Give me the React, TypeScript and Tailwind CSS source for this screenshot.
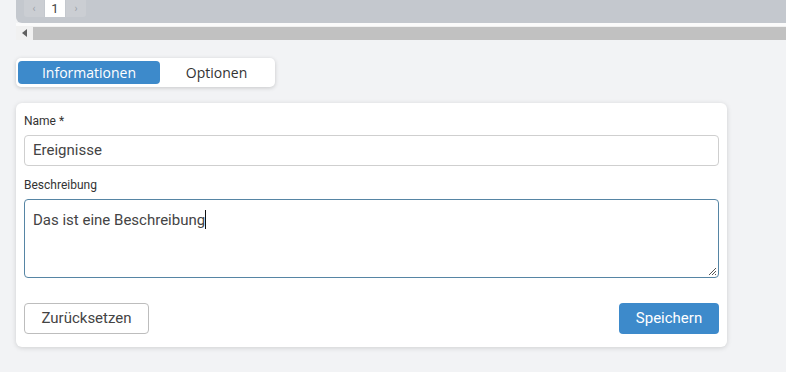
import React from "react";

export default function App() {
  const roboto = { fontFamily: "Roboto, 'Liberation Sans', sans-serif" } as React.CSSProperties;
  return (
    <div className="w-[786px] h-[372px] bg-[#f2f3f5] overflow-hidden" style={roboto}>
      {/* top table remnant */}
      <div className="pl-4">
        <div className="h-[23px] bg-[#c4c8ce] rounded-bl-[6px] pl-2 flex items-start">
          <div className="flex h-[17px] gap-px">
            <div className="w-[20px] h-[17px] bg-[#cbced3] rounded-bl-[3px] flex items-center justify-center text-[10px] text-[#9aa0a8]">‹</div>
            <div className="w-[20px] h-[17px] bg-white flex items-center justify-center text-[13px] text-[#444]">1</div>
            <div className="w-[20px] h-[17px] bg-[#cbced3] rounded-br-[3px] flex items-center justify-center text-[10px] text-[#9aa0a8]">›</div>
          </div>
        </div>
        <div className="h-[3px] bg-[#fbfbfb]" />
        <div className="h-[14px] bg-[#f1f1f1] flex items-center">
          <div className="w-[17px] flex items-center justify-center">
            <svg width="6" height="8" viewBox="0 0 6 8"><path d="M5 0 L0 4 L5 8 Z" fill="#606060" /></svg>
          </div>
          <div className="flex-1 h-[13px] bg-[#c1c1c1]" />
        </div>
      </div>

      {/* tabs */}
      <div className="pl-4 mt-[18px]">
        <div
          className="w-[259px] h-[29px] bg-white rounded-[5px] shadow-[0_1px_4px_rgba(0,0,0,0.18)] flex items-center px-[2px]"
          style={{ fontFamily: "'Open Sans', 'Noto Sans', sans-serif" }}
        >
          <div className="w-[142px] h-[23px] bg-[#3d8acb] rounded-[4px] text-white text-[14px] flex items-center justify-center">
            Informationen
          </div>
          <div className="flex-1 h-[23px] text-[#333] text-[14px] flex items-center justify-center">Optionen</div>
        </div>
      </div>

      {/* card */}
      <div className="ml-4 mt-[16px] w-[711px] h-[244px] bg-white rounded-[6px] shadow-[0_1px_5px_rgba(0,0,0,0.15)] px-2 pt-[9px] flex flex-col">
        <div className="text-[12px] leading-[18px] text-[#333] mb-[5px]">Name *</div>
        <div className="h-[31px] border border-[#cfcfcf] rounded-[4px] px-2 flex items-center text-[15px] text-[#444]">
          Ereignisse
        </div>
        <div className="text-[12px] leading-[18px] text-[#333] mt-[10px] mb-[5px]">Beschreibung</div>
        <div className="relative h-[79px] border border-[#5685a4] rounded-[4px] px-2 pt-[8px] text-[15px] leading-[24px] text-[#444]">
          <span>Das ist eine Beschreibung</span>
          <span className="inline-block w-px h-[19px] bg-[#111] align-[-4px]" />
          <svg className="absolute right-[1px] bottom-[1px]" width="9" height="9" viewBox="0 0 9 9">
            <path d="M8 1 L1 8 M8 4 L4 8 M8 7 L7 8" stroke="#555" strokeWidth="1" />
          </svg>
        </div>
        <div className="mt-[25px] flex justify-between">
          <div className="w-[125px] h-[31px] border border-[#bdbdbd] rounded-[4px] flex items-center justify-center text-[15px] text-[#444]">
            Zurücksetzen
          </div>
          <div className="w-[100px] h-[31px] bg-[#3d8acb] rounded-[4px] flex items-center justify-center text-[15px] text-white">
            Speichern
          </div>
        </div>
      </div>
    </div>
  );
}
